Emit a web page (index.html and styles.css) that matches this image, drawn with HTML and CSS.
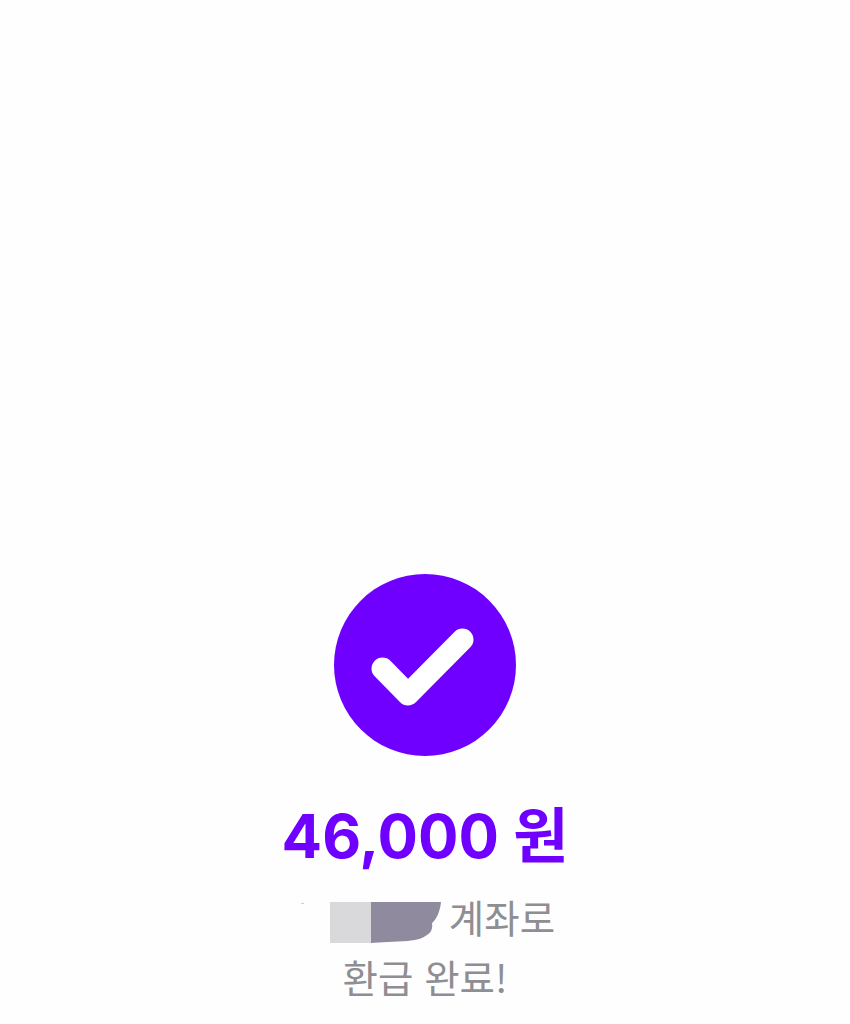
FILE: index.html
```html
<!DOCTYPE html>
<html lang="ko">
<head>
<meta charset="utf-8">
<title>환급 완료</title>
<link rel="stylesheet" href="styles.css">
</head>
<body>
<main class="result">
  <svg class="check" width="182" height="182" viewBox="0 0 182 182" aria-hidden="true">
    <circle cx="91" cy="91" r="91" fill="#6f00ff"/>
    <path d="M48.500 94.500 L74 120.500 L128.500 65.500" fill="none" stroke="#ffffff" stroke-width="22" stroke-linecap="round" stroke-linejoin="round"/>
  </svg>
  <h1 class="amount">46,000 원</h1>
  <p class="line line-account">
    <svg class="redact" width="141" height="42" viewBox="0 0 141 42" aria-hidden="true">
      <rect x="1" y="1" width="3" height="1" fill="#cfcfd2"/>
      <rect x="30" y="0" width="41" height="41" fill="#d9d8db"/>
      <path d="M71 0 H141 C140 10 136 18 132 21 C133 26 131 31 127 33 C122 37 115 38 108 39 C95 40 80 40 71 41 Z" fill="#8f8a9e"/>
    </svg>
    <span>계좌로</span>
  </p>
  <p class="line">환급 완료!</p>
</main>
</body>
</html>
```
FILE: styles.css
```css
html, body {
  margin: 0;
  padding: 0;
  background: #fefefe;
}

.result {
  display: flex;
  flex-direction: column;
  align-items: center;
  padding-top: 574px;
  height: 1024px;
  box-sizing: border-box;
  overflow: hidden;
}

.check {
  display: block;
  flex: none;
}

.amount {
  margin: 38px 0 0;
  font-family: Inter, "Noto Sans CJK KR", sans-serif;
  font-size: 60px;
  font-weight: 700;
  line-height: 84px;
  color: #6f00ff;
  white-space: nowrap;
}

.line {
  margin: 0;
  font-family: "Noto Sans CJK KR", sans-serif;
  font-size: 38.500px;
  font-weight: 400;
  line-height: 60px;
  color: #8e8e93;
  white-space: nowrap;
}

.line-account {
  display: flex;
  align-items: center;
  gap: 8px;
  margin-top: 8px;
  padding-left: 5px;
}

.redact {
  display: block;
  flex: none;
  margin-top: 14px;
}
```
